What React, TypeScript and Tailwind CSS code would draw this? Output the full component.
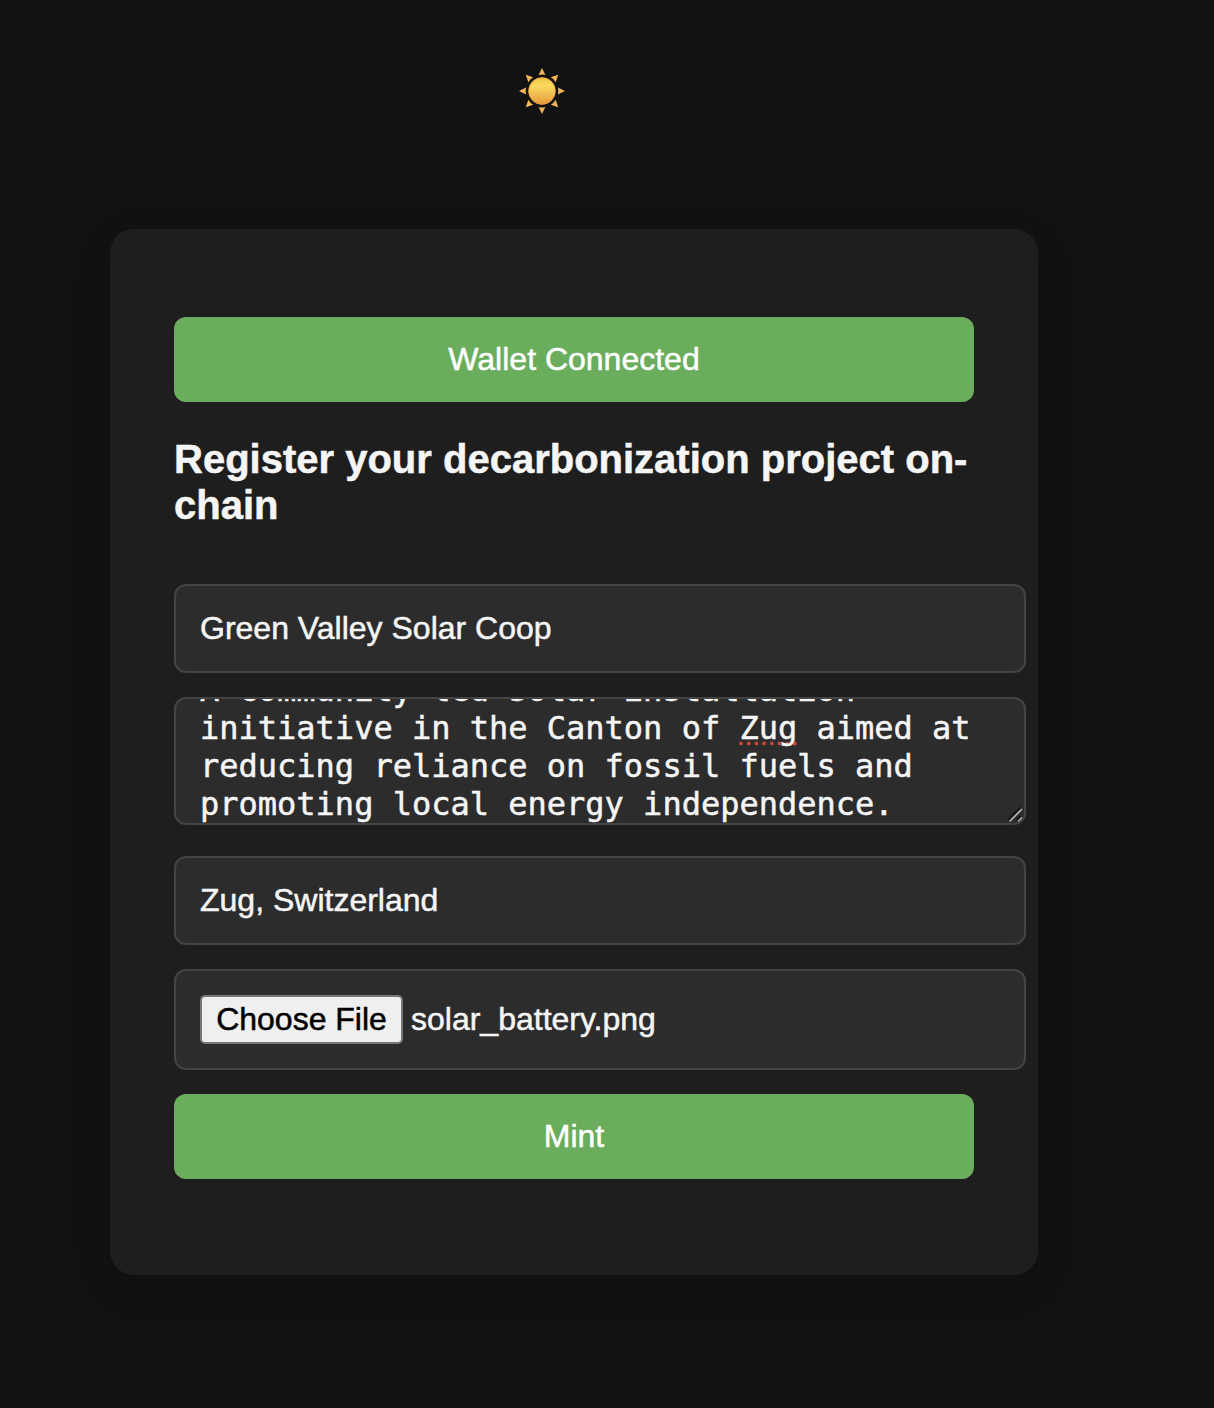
const RAY_ANGLES = [0, 45, 90, 135, 180, 225, 270, 315];

function Sun() {
  return (
    <svg width="48" height="48" viewBox="-24 -24 48 48" role="img" aria-label="Sun">
      <defs>
        <linearGradient id="disk" x1="0" y1="0" x2="0" y2="1">
          <stop offset="0" stopColor="#f3c544" />
          <stop offset="0.3" stopColor="#f8d95c" />
          <stop offset="0.65" stopColor="#f1bb50" />
          <stop offset="1" stopColor="#e6993c" />
        </linearGradient>
      </defs>
      {RAY_ANGLES.map((angle) => (
        <path key={angle} d="M0 -23 L3.4 -15.9 Q0 -16.9 -3.4 -15.9 Z" fill="#f3b658" transform={`rotate(${angle})`} />
      ))}
      <circle r="13.4" fill="url(#disk)" stroke="#e5a03d" strokeWidth="0.8" />
    </svg>
  );
}

function PrimaryButton({ label }: { label: string }) {
  return (
    <button className="block h-[85px] w-full rounded-xl bg-[#69ad5d] text-center text-[32px] leading-[37px] text-white">
      {label}
    </button>
  );
}

const field = "w-[852px] rounded-xl border-2 border-[#444444] bg-[#2c2c2c] text-[32px] text-[#f5f5f5]";

export default function App() {
  return (
    <div className="h-[1408px] w-full overflow-hidden bg-[#121212] font-['Liberation_Sans',Arial,sans-serif] [-webkit-text-stroke:0.5px_currentColor]">
      <header className="flex h-[229px] pt-[67px] pl-[518px]">
        <Sun />
      </header>
      <main className="ml-[110px] h-[1046px] w-[928px] rounded-3xl bg-[#1e1e1e] px-16 pt-[88px] shadow-[0_12px_40px_rgba(0,0,0,0.15)]">
        <PrimaryButton label="Wallet Connected" />
        <h1 className="mt-[34px] h-[92px] text-[40px] leading-[46px] font-bold text-[#f5f5f5]">
          Register your decarbonization project on-
          <br />
          chain
        </h1>
        <form className="mt-14 flex flex-col" onSubmit={(e) => e.preventDefault()}>
          <input className={`${field} h-[89px] px-6`} defaultValue="Green Valley Solar Coop" />
          <div
            className={`${field} relative mt-6 flex h-32 flex-col justify-end overflow-hidden px-6 font-['DejaVu_Sans_Mono',monospace] leading-[38px] whitespace-pre`}
          >
            <p className="-mb-px shrink-0">A community-led solar installation</p>
            <p className="mt-px shrink-0">
              initiative in the Canton of{" "}
              <span className="relative">
                <svg className="absolute top-[32px] left-0 -z-0" width="58" height="5" viewBox="0 0 58 5">
                  <path d="M2 2.5H58" stroke="#c8473c" strokeWidth="3.8" strokeLinecap="round" strokeDasharray="0 7.7" />
                </svg>
                <span className="relative">Zug</span>
              </span>{" "}
              aimed at
            </p>
            <p className="shrink-0">reducing reliance on fossil fuels and</p>
            <p className="shrink-0">promoting local energy independence.</p>
            <svg className="absolute right-0 bottom-0" width="18" height="18" viewBox="0 0 18 18">
              <path d="M2 15L14.5 2.5M10.5 15L14.5 11" stroke="#151515" strokeWidth="2" />
              <path d="M3.5 16.5L16 4M12 16.5L16 12.5" stroke="#b4b4b4" strokeWidth="1.6" />
            </svg>
          </div>
          <input className={`${field} mt-[31px] h-[89px] px-6`} defaultValue="Zug, Switzerland" />
          <div className={`${field} mt-6 flex h-[101px] items-center px-6 leading-[37px]`}>
            <button
              type="button"
              className="h-[49px] w-[203px] rounded-[5px] border-2 border-[#767676] bg-[#efefef] text-black"
            >
              Choose File
            </button>
            <span className="ml-2">solar_battery.png</span>
          </div>
          <div className="mt-6">
            <PrimaryButton label="Mint" />
          </div>
        </form>
      </main>
    </div>
  );
}
